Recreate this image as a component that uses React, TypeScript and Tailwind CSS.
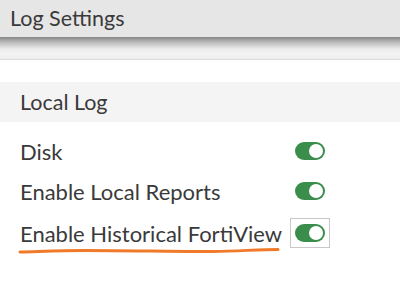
import React from "react";

function Toggle() {
  return (
    <div className="w-[30px] h-[18px] rounded-full bg-[#3b8d4b] relative">
      <div className="absolute right-[2px] top-[2px] w-[14px] h-[14px] rounded-full bg-white" />
    </div>
  );
}

export default function App() {
  return (
    <div className="w-[400px] h-[306px] bg-white relative overflow-hidden" style={{ fontFamily: "Lato, 'Open Sans', sans-serif" }}>
      <div className="h-[37px] bg-[#e6e6e6] flex items-center px-[10px] text-[21.5px] text-[#3a3a3a]">Log Settings</div>
      <div className="h-[22px] bg-[linear-gradient(to_bottom,#878787_0%,#bdbdbd_25%,#ebebeb_55%,#f3f3f3_75%,#eeeeee_100%)]" />
      <div className="h-[1px] bg-[#dcdcdc]" />
      <div className="h-[22px]" />
      <div className="h-[40px] bg-[#f4f4f4] flex items-center px-[20px] text-[21.5px] text-[#3a3a3a]">Local Log</div>
      <div className="px-[20px] text-[22px] text-[#3a3a3a]">
        <div className="h-[40px] mt-[9px] flex items-center">
          <span className="w-[275px]">Disk</span>
          <Toggle />
        </div>
        <div className="h-[40px] flex items-center">
          <span className="w-[275px]">Enable Local Reports</span>
          <Toggle />
        </div>
        <div className="h-[44px] flex items-center">
          <span className="w-[270px] whitespace-nowrap">Enable Historical FortiView</span>
          <div className="border border-[#c8c8c8] px-[4px] py-[5px]">
            <Toggle />
          </div>
        </div>
      </div>
      <svg className="absolute left-0 top-0" width="400" height="306" viewBox="0 0 400 306">
        <path d="M20 252 C40 251.5 60 250.5 85 250.5 C130 250.5 180 251.8 213 251.5 C240 251 260 249.5 278 249.5" fill="none" stroke="#f07a2a" strokeWidth="3" strokeLinecap="round" />
      </svg>
    </div>
  );
}
